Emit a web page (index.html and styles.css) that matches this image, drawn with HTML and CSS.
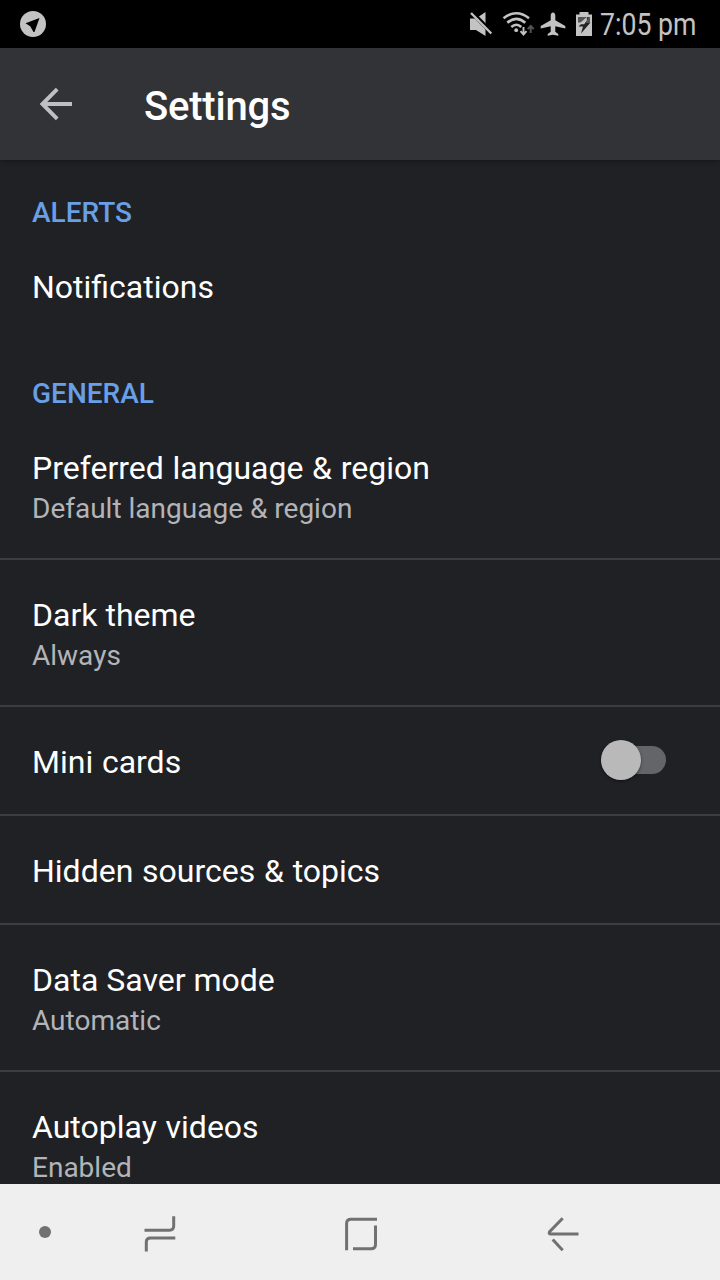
FILE: index.html
```html
<!DOCTYPE html>
<html>
<head>
<meta charset="UTF-8">
<meta name="viewport" content="width=device-width,initial-scale=1.0">
<title>Settings</title>
<link rel="stylesheet" href="styles.css">
</head>
<body>
	<div class="status">
		<svg class="telegram" width="26" height="26" viewBox="0 0 26 26">
			<circle cx="13" cy="13" r="13" fill="#c3c3c3"/>
			<path d="M19.5 7L5.5 12.3L10.2 15.2L13.5 21H14.5Z" fill="#000"/>
		</svg>
		<div class="status-right">
			<svg width="132" height="48" viewBox="460 0 132 48" fill="#c3c3c3">
				<!-- mute -->
				<path d="M470 18.5H476L485.5 12V36L476 30H470Z"/>
				<path d="M471 11.5L492 33" stroke="#000" stroke-width="4.5"/>
				<path d="M471 13L491.3 33.5" stroke="#c3c3c3" stroke-width="2.4"/>
				<!-- wifi -->
				<g fill="none" stroke="#c3c3c3" stroke-width="2.6">
					<path d="M503.5 18.2Q516.3 8.3 529 18.2"/>
					<path d="M507.3 22.8Q516.3 15 525.3 22.8"/>
					<path d="M511.3 27Q516.3 22.5 521.3 27"/>
				</g>
				<circle cx="516.2" cy="30.2" r="1.9"/>
				<path d="M523.5 27V34M520.5 31.2L523.5 34.5L526.5 31.2" fill="none" stroke="#c3c3c3" stroke-width="1.9"/>
				<path d="M530.7 33V26M527.7 29.2L530.7 25.9L533.7 29.2" fill="none" stroke="#555" stroke-width="1.9"/>
				<!-- airplane -->
				<path d="M553 12.5C554.5 12.5 555.3 14 555.3 15.5V20.3L565.3 26V28.5L555.3 26.3V31.7L558.3 34V35.7L553 34.7L547.7 35.7V34L550.7 31.7V26.3L540.7 28.5V26L550.7 20.3V15.5C550.7 14 551.5 12.5 553 12.5Z"/>
				<!-- battery -->
				<path d="M579.5 12H588.5V14.5H592V36H576V14.5H579.5Z"/>
				<path d="M578 17H590V22.5H578Z" fill="#555"/>
				<path d="M588.5 16.5L578.5 26.5H583L581 33.5L590.5 22.5H586Z" fill="#222"/>
				<path d="M586.8 17L578.7 24.3H584.2L586.8 20.5Z"/>
			</svg>
			<div class="time">7:05 pm</div>
		</div>
	</div>
	<header>
		<svg width="36" height="36" viewBox="38 86 36 36" fill="none" stroke="#bdc1c6" stroke-width="3.9">
			<path d="M72 104H43M57.2 89.2L42.4 104L57.2 118.8"/>
		</svg>
		<h1>Settings</h1>
	</header>
	<section class="list">
		<h2>ALERTS</h2>
		<div class="item last">
			<p>Notifications</p>
		</div>
		<h2>GENERAL</h2>
		<div class="item">
			<p class="wide">Preferred language &amp; region</p>
			<span>Default language &amp; region</span>
		</div>
		<div class="item">
			<p>Dark theme</p>
			<span>Always</span>
		</div>
		<div class="item row">
			<p class="wide">Mini cards</p>
			<div class="switch"><div class="knob"></div></div>
		</div>
		<div class="item">
			<p class="wide">Hidden sources &amp; topics</p>
		</div>
		<div class="item">
			<p>Data Saver mode</p>
			<span>Automatic</span>
		</div>
		<div class="item">
			<p class="wide">Autoplay videos</p>
			<span>Enabled</span>
		</div>
	</section>
	<nav>
		<svg width="720" height="96" viewBox="0 1184 720 96" fill="none" stroke="#717171" stroke-width="3">
			<circle cx="45" cy="1232" r="6" fill="#717171" stroke="none"/>
			<!-- recents -->
			<path d="M144.5 1230.2H169.5Q173.7 1230.2 173.7 1226V1216.3"/>
			<path d="M175.3 1238H150.5Q146.3 1238 146.3 1242V1251.5"/>
			<!-- home -->
			<path d="M346.6 1250.3V1223.5Q346.6 1219.2 351 1219.2H377"/>
			<path d="M375.5 1225.5V1244.5Q375.5 1248.8 371 1248.8H353"/>
			<!-- back -->
			<path d="M562.7 1218.2L549.6 1231.6Q548.3 1234.1 551 1234.1H578.5"/>
			<path d="M552.7 1239.5L562.7 1250.3"/>
		</svg>
	</nav>
</body>
</html>
```
FILE: styles.css
```css
*{
	margin: 0;
	padding: 0;
	box-sizing: border-box;
}
body{
	display: flex;
	flex-direction: column;
	width: 720px;
	height: 1280px;
	overflow: hidden;
	background: #202125;
	font-family: Roboto, "Liberation Sans", sans-serif;
	color: #fff;
}
svg{
	display: block;
	flex: none;
}
.status{
	display: flex;
	align-items: center;
	justify-content: space-between;
	flex: none;
	height: 48px;
	padding-left: 20px;
	background: #000;
}
.status-right{
	display: flex;
	width: 260px;
	height: 48px;
}
.time{
	margin-left: 8px;
	font-size: 31px;
	line-height: 50px;
	white-space: nowrap;
	color: #c3c3c3;
	transform: scaleX(0.86);
	transform-origin: left;
}
header{
	display: flex;
	align-items: center;
	flex: none;
	height: 112px;
	padding-left: 38px;
	background: #323337;
	box-shadow: 0 1px 5px rgba(0,0,0,0.4);
	z-index: 1;
}
h1{
	margin: 6px 0 0 70px;
	font-size: 40px;
	line-height: 48px;
	font-weight: 500;
	letter-spacing: -0.2px;
}
.list{
	flex: 1;
	min-height: 0;
	overflow: hidden;
}
h2{
	height: 72px;
	padding: 36px 32px 3px;
	font-size: 28px;
	line-height: 33px;
	font-weight: 500;
	color: #699fe6;
}
.item{
	padding: 36px 32px 33px;
	border-bottom: 2px solid #3c3d41;
}
.item.last{
	border-color: transparent;
}
.item p{
	font-size: 32px;
	line-height: 38px;
}
.item .wide{
	word-spacing: 0.8px;
}
.item span{
	display: block;
	margin-top: 5px;
	font-size: 28px;
	line-height: 33px;
	color: #b2b4b8;
}
.row{
	display: flex;
	justify-content: space-between;
	padding-right: 54px;
}
.switch{
	display: flex;
	align-items: center;
	width: 56px;
	height: 28px;
	margin-top: 3px;
	border-radius: 14px;
	background: #646568;
}
.knob{
	flex: none;
	width: 40px;
	height: 40px;
	margin-left: -9px;
	border-radius: 50%;
	background: #b9b9b9;
	box-shadow: 0 1px 3px rgba(0,0,0,0.5);
}
nav{
	flex: none;
	height: 96px;
	background: #efefef;
}
```
